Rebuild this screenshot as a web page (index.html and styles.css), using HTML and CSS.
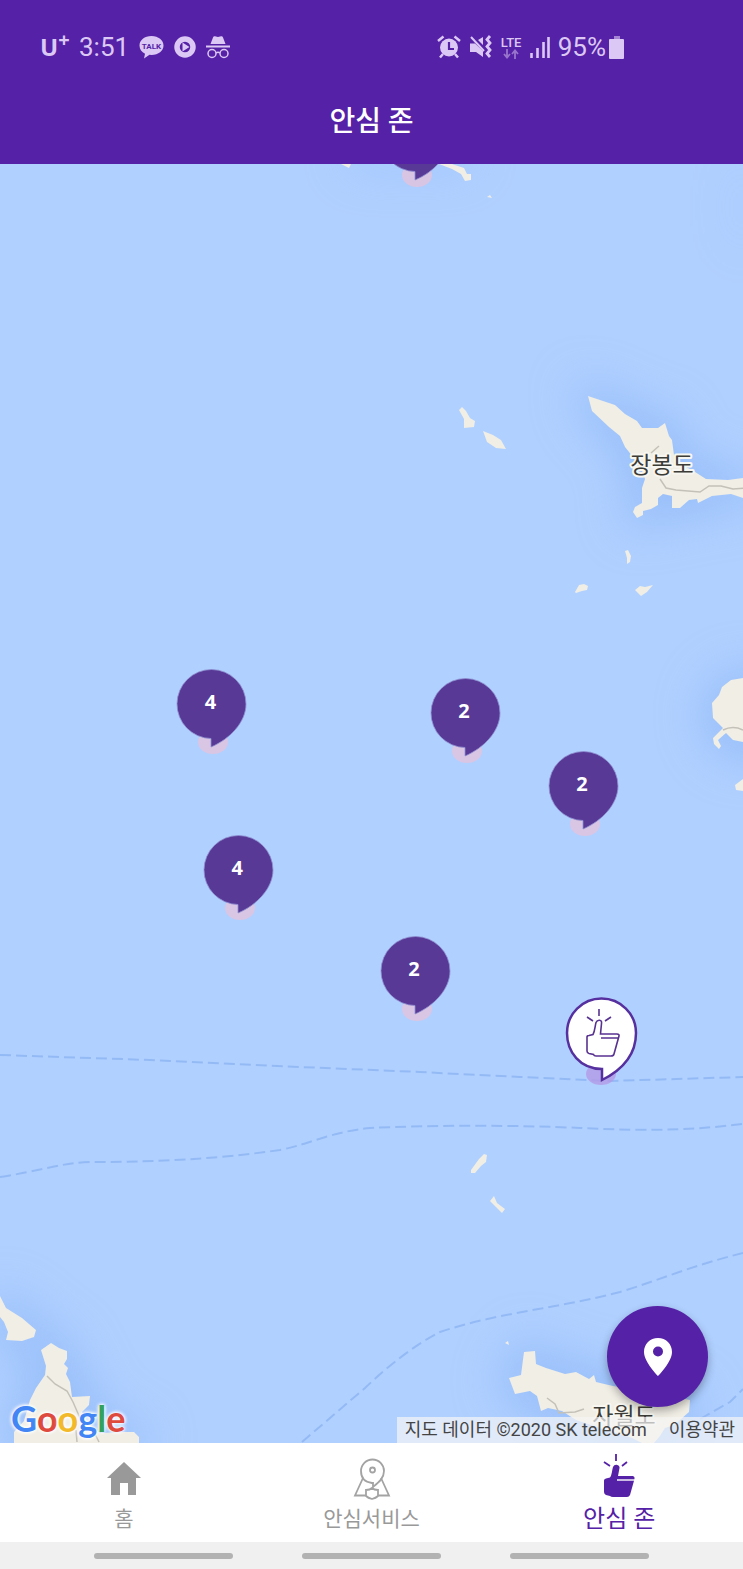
FILE: index.html
```html
<!DOCTYPE html>
<html lang="ko">
<head>
    <meta charset="UTF-8">
    <meta name="viewport" content="width=device-width, initial-scale=1.0">
    <title>안심 존</title>
    <link rel="stylesheet" href="styles.css">
</head>
<body>
    <!-- shared marker shape -->
    <svg class="defs" width="0" height="0" aria-hidden="true">
        <symbol id="pin" viewBox="0 0 76 90">
            <ellipse cx="38" cy="75" rx="15" ry="12" fill="#e3c3dd" opacity="0.800"/>
            <path d="M36 71.500A34.500 34.500 0 1 1 71 37C71 55 55 72 36 80Z" fill="#583996" stroke="#8f8fd0" stroke-width="0.800"/>
        </symbol>
    </svg>

    <div class="app">
        <div class="status-bar">
            <div class="status-group">
                <span class="carrier">U<sup>+</sup></span>
                <span class="clock">3:51</span>
                <svg class="ic-talk" viewBox="0 0 25 24">
                    <path d="M12.500 1C5.500 1 .5 5.200.5 10.500c0 3.800 2.300 6.600 5.500 8.200L5 23.500l5.500-3.700 2 .1c7 0 12-4.200 12-9.400S19.500 1 12.500 1z" fill="currentColor"/>
                    <text x="12.500" y="13.500" text-anchor="middle">TALK</text>
                </svg>
                <svg class="ic-play" viewBox="0 0 22 22">
                    <circle cx="11" cy="11" r="8" fill="none" stroke="currentColor" stroke-width="5.500"/>
                    <path d="M8.500 6.500v9l7-4.500z" fill="currentColor"/>
                </svg>
                <svg class="ic-spy" viewBox="0 0 24 24">
                    <path d="M4.500 9L7 2.500Q7.500 1 9 1.300l3 .7 3-.7q1.500-.3 2 1.200L19.500 9zM0 10.500h24v2H0z" fill="currentColor"/>
                    <g fill="none" stroke="currentColor" stroke-width="1.500"><circle cx="6" cy="18.500" r="4"/><circle cx="18" cy="18.500" r="4"/><path d="M10 18q2-1.500 4 0"/></g>
                </svg>
            </div>
            <div class="status-group right">
                <svg class="ic-alarm" viewBox="0 0 24 24">
                    <circle cx="12" cy="12.500" r="9" fill="currentColor"/>
                    <path d="M1 6l5.500-4.500M23 6l-5.500-4.500M6 19L3 22.500M18 19l3 3.500" stroke="currentColor" stroke-width="2.500"/>
                    <path d="M12 7v7h5" fill="none" stroke="#5521a6" stroke-width="2.200"/>
                </svg>
                <svg class="ic-mute" viewBox="0 0 24 24">
                    <path d="M1 8.500h5l8 7.500v6l-7-5H1zM9 5l5-3v8z" fill="currentColor"/>
                    <path d="M2 2l13 14" stroke="currentColor" stroke-width="2"/>
                    <path d="M21 1l-3 3.500 3 3.500-3 3.500 3 3.500-3 3.500 3 3.500" fill="none" stroke="currentColor" stroke-width="2.800"/>
                </svg>
                <span class="lte">LTE
                    <svg viewBox="0 0 16 10"><path d="M4 0v8M1 5l3 3.500L7 5M12 10V2M9 5l3-3.500L15 5" fill="none" stroke="currentColor" stroke-width="1.800"/></svg>
                </span>
                <svg class="ic-signal" viewBox="0 0 20 22"><path d="M1.500 17v5M7.500 12v10M13.500 6v16M18.500 1v21" stroke="currentColor" stroke-width="2.600"/></svg>
                <span class="percent">95%</span>
                <svg class="ic-battery" viewBox="0 0 16 23"><path d="M5 0h6v3H5z" fill="currentColor" opacity="0.600"/><rect y="3" width="15" height="20" rx="1" fill="currentColor"/></svg>
            </div>
        </div>

        <header class="title-bar">
            <h1>안심 존</h1>
        </header>

        <main class="map">
            <svg class="map-canvas" viewBox="0 164 743 1279" preserveAspectRatio="xMidYMid slice" aria-hidden="true">
                <defs>
                    <filter id="soft" x="-50%" y="-50%" width="200%" height="200%"><feGaussianBlur stdDeviation="24"/></filter>
                    <path id="jangbong" d="M588 396L615 405L625 414L637 421L642 428L658 428L665 423L669 436L672 440L674 455L680 464L692 470L706 479L728 480L743 478V498L731 494L712 496L698 503L697 499L689 500L680 508H672V496L663 494L658 498V505L651 509L643 511L643 515L637 518L633 512L635 507L642 503V488L645 479L641 468L633 457L625 447L620 436L609 427L592 411Z"/>
                    <path id="southwest" d="M0 1296L6 1308L22 1318L36 1330L34 1337L22 1341L6 1340L8 1332L4 1322L0 1317ZM41 1350L51 1343L59 1348L67 1351L67 1359L64 1364L68 1368L66 1374L70 1382L72 1397L90 1396L89 1405L82 1412L88 1423L100 1433L124 1432L134 1432L139 1437V1443H14L14 1432L24 1421L30 1400L36 1388L45 1375L46 1366Z"/>
                    <path id="jawol" d="M524 1352L535 1351L536 1364L546 1368L565 1374L576 1372L589 1379L594 1375L596 1382L613 1386L690 1400L689 1412L680 1420L674 1425L665 1428L660 1436L654 1443H642L632 1438L600 1428L576 1420L562 1411L548 1408L541 1411L537 1396L530 1391L515 1394L509 1378L521 1375Z"/>
                </defs>
                <rect y="164" width="743" height="1279" fill="#b0d0ff"/>
                <g filter="url(#soft)" fill="#83aff5" stroke="#83aff5" stroke-width="22" opacity="0.550">
                    <use href="#jangbong"/>
                    <use href="#southwest"/>
                    <use href="#jawol"/>
                    <circle cx="748" cy="715" r="35"/>
                </g>
                <path d="M350 150H470V164H350ZM743 164V250" fill="#83aff5" stroke="#83aff5" stroke-width="8" filter="url(#soft)" opacity="0.400"/>
                <g fill="#f0eee5">
                    <use href="#jangbong"/>
                    <use href="#southwest"/>
                    <use href="#jawol"/>
                    <path d="M341 164H351L349 168ZM439 164H452L464 168L467 174L471 174L471 180L465 181L461 174L452 169ZM487 197l3-2 2 3z"/>
                    <path d="M459 410l3-3 4 4 4 7 5 3-1 6-10 1 0-9zM483 431l10 4 8 5 5 9-10-1-9-6z"/>
                    <path d="M625 551l3-1 3 6-1 6-3 2 0-6zM575 592l4-7 5-1 4 2-1 4-5 1-6 2zM635 590l5-4 5 1 8-2-6 7-6 4z"/>
                    <path d="M743 678L731 680L722 687L719 695L712 703L713 718L723 728L713 738L714 744L719 749L721 746L718 740L726 733L733 740L743 742ZM743 779L735 785L736 790L743 791Z"/>
                    <path d="M471 1170l8-11 5-5 3 1-1 7-5 4-6 7h-4zM490 1201l4-5 3 7 8 6-3 4-6-6zM505 1343l3-2 1 4z"/>
                </g>
                <g fill="none" stroke="#c4c1b8" stroke-width="1.500">
                    <path d="M651 453l8-7M660 479l6 9 10 2 24 2 9-6 12 0 12 3 13-1"/>
                    <path d="M723 730q10-5 20 0M47 1376l8 8 12 7 6 11 7 16M77 1442l-1-12M93 1430l6 12M547 1398l8 6 4 9 16-1 9-3"/>
                </g>
                <!-- ferry routes -->
                <g fill="none" stroke="#94baf5" stroke-width="2" stroke-dasharray="11 5">
                    <path d="M0 1055L150 1060L300 1067L420 1072L520 1077L610 1081L743 1077"/>
                    <path d="M0 1177C40 1171 60 1163 90 1162C150 1162 210 1160 280 1150C310 1144 330 1132 370 1128C430 1125 520 1125 580 1128C660 1132 700 1129 743 1124"/>
                    <path d="M302 1442L365 1388Q405 1350 440 1332C500 1312 560 1308 620 1292C660 1280 690 1266 743 1253"/>
                    <path d="M700 1419L730 1402L743 1389"/>
                </g>
                <g class="place" text-anchor="middle">
                    <text x="662" y="473">장봉도</text>
                    <text x="624" y="1424">자월도</text>
                </g>
            </svg>

            <button class="marker m1" type="button"><svg><use href="#pin"/></svg><span>4</span></button>
            <button class="marker m2" type="button"><svg><use href="#pin"/></svg><span>2</span></button>
            <button class="marker m3" type="button"><svg><use href="#pin"/></svg><span>2</span></button>
            <button class="marker m4" type="button"><svg><use href="#pin"/></svg><span>4</span></button>
            <button class="marker m5" type="button"><svg><use href="#pin"/></svg><span>2</span></button>
            <button class="marker m6" type="button" aria-label="안심 존"><svg><use href="#pin"/></svg></button>
            <button class="marker m7" type="button" aria-label="안심 존">
                <svg viewBox="0 0 76 90">
                    <ellipse cx="36" cy="79" rx="15" ry="11" fill="#b497e6" opacity="0.750"/>
                    <path d="M37 74C15 74 2 57 2 38A34.500 34.500 0 0 1 71 38C71 61 55 76 37 85V74Z" fill="#fff" stroke="#56309f" stroke-width="2.500"/>
                    <g transform="translate(21 14)" fill="none" stroke="#583290" stroke-width="1.600">
                        <path d="M13 0v7M1 8l6 4M25 8l-6 4"/>
                        <path d="M1 28Q1 26.500 3 26.500L7 25.500C9 22 9 17 10 13.500Q11 11 13.500 11.200Q16 11.500 15.500 14.500L14.500 25H31Q33.500 25.200 33 27L28 45Q27.500 47 25 47H10Q8 47 7.500 45.500L3 44.500Q1 44 1 42ZM15 29H32"/>
                    </g>
                </svg>
            </button>

            <a class="google" href="#" aria-label="Google"><span class="blue">G</span><span class="red">o</span><span class="yellow">o</span><span class="blue">g</span><span class="green">l</span><span class="red">e</span></a>

            <div class="attribution">
                <span>지도 데이터 ©2020 SK telecom</span>
                <a href="#">이용약관</a>
            </div>

            <button class="fab" type="button" aria-label="내 위치">
                <svg viewBox="0 0 28 38"><path d="M14 0C6 0 0 6 0 14c0 10 14 24 14 24s14-14 14-24C28 6 22 0 14 0zm0 18.500a5 5 0 1 1 0-10 5 5 0 0 1 0 10z" fill="#fff"/></svg>
            </button>
        </main>

        <nav class="tabs">
            <a href="#">
                <svg viewBox="0 0 36 48"><path d="M18 7L1 23h4v17h9V28h8v12h8V23h5z" fill="#999"/></svg>
                <span>홈</span>
            </a>
            <a href="#">
                <svg viewBox="0 0 36 48" fill="none" stroke="#a3a3a3" stroke-width="1.800">
                    <path d="M18 28C10 27 7 22 7 16a11.500 11.500 0 0 1 23 0C30 23 25 27 19 32v-4z"/>
                    <circle cx="18.500" cy="15" r="2.500"/>
                    <path d="M9 23L1 40.500h11M27 23l8 17.500H24M12 35q4 0 6-2 2 2 6 2v6q-2 2-6 3-4-1-6-3z"/>
                </svg>
                <span>안심서비스</span>
            </a>
            <a href="#" class="active">
                <svg viewBox="-3 1 36 48">
                    <path d="M12 0v7M0 8l6 4M23 8l-5 4" fill="none" stroke="#5521a6" stroke-width="1.800"/>
                    <path d="M0 26.500Q0 25 2 24.500L6 23.500C8 21 8 16 9 13Q10 10.500 12.500 10.700Q16 11.500 15.500 14L14 22H29Q31 22.500 30.500 25L26 41Q25 43 23 43H9Q7 43 6 42L2 41Q0 40 0 38Z" fill="#5521a6"/>
                    <path d="M13 26H31" stroke="#fff" stroke-width="1.400"/>
                </svg>
                <span>안심 존</span>
            </a>
        </nav>

        <div class="system-bar">
            <i></i>
            <i></i>
            <i></i>
        </div>
    </div>
</body>
</html>
```
FILE: styles.css
```css
* {
    box-sizing: border-box;
}

body {
    margin: 0;
    font-family: Roboto, 'Noto Sans CJK KR', sans-serif;
    background-color: #f0f0f0;
}

button {
    border: none;
    background: none;
    padding: 0;
    font-family: inherit;
    cursor: pointer;
}

a {
    color: inherit;
    text-decoration: none;
}

svg {
    display: block;
    overflow: visible;
}

.defs {
    position: absolute;
}

.app {
    display: flex;
    flex-direction: column;
    min-height: 100vh;
}

/* status bar */
.status-bar {
    display: flex;
    justify-content: space-between;
    align-items: center;
    height: 76px;
    padding: 18px 118px 0 40px;
    background-color: #5521a6;
    color: #dcc8f4;
}

.status-group {
    display: flex;
    align-items: center;
    gap: 10px;
}

.status-group.right {
    gap: 8px;
}

.carrier {
    width: 29px;
    font-family: 'Open Sans', sans-serif;
    font-size: 24px;
    font-weight: 700;
    line-height: 32px;
    white-space: nowrap;
}

.carrier sup {
    font-size: 20px;
    line-height: 0;
}

.clock, .percent {
    font-size: 26px;
    line-height: 32px;
}

.ic-talk {
    width: 25px;
    height: 24px;
}

.ic-talk text {
    font-size: 8px;
    font-weight: 700;
    fill: #5521a6;
}

.ic-play {
    width: 22px;
    height: 22px;
}

.ic-spy, .ic-alarm, .ic-mute {
    width: 24px;
    height: 24px;
}

.lte {
    width: 21px;
    font-size: 13px;
    font-weight: 500;
    line-height: 13px;
}

.lte svg {
    width: 16px;
    height: 10px;
    margin: 0 auto;
    opacity: 0.5;
}

.ic-signal {
    width: 20px;
    height: 22px;
}

.percent {
    margin-right: -5px;
}

.ic-battery {
    width: 16px;
    height: 23px;
}

.title-bar {
    display: flex;
    justify-content: center;
    align-items: center;
    height: 88px;
    padding-top: 4px;
    background-color: #5521a6;
    color: #ffffff;
}

.title-bar h1 {
    margin: 0;
    font-size: 28px;
    font-weight: 500;
    line-height: 40px;
}

/* map */
.map {
    position: relative;
    flex: 1;
    min-height: 600px;
    overflow: hidden;
    background-color: #b0d0ff;
}

.map-canvas {
    position: absolute;
    width: 100%;
    height: 100%;
}

.place {
    font-size: 23px;
    fill: #3c3c38;
    stroke: #f7f6f0;
    stroke-width: 4px;
    stroke-linejoin: round;
    paint-order: stroke;
}

.marker {
    position: absolute;
    width: 76px;
    height: 90px;
    margin: -37px 0 0 -37px;
    color: #ffffff;
}

.marker svg {
    width: 100%;
    height: 100%;
}

.marker span {
    position: absolute;
    top: 23px;
    left: 0;
    width: 70px;
    font-family: 'Noto Sans', sans-serif;
    font-size: 20px;
    font-weight: 700;
    line-height: 24px;
    text-align: center;
}

.m1 { left: 28.6%; top: 42.2%; }
.m2 { left: 62.7%; top: 42.9%; }
.m3 { left: 78.6%; top: 48.6%; }
.m4 { left: 32.2%; top: 55.2%; }
.m5 { left: 56%; top: 63.1%; }
.m6 { left: 56%; top: -2.1%; }
.m7 { left: 81%; top: 67.9%; }

.google {
    position: absolute;
    left: 11px;
    bottom: 1px;
    font-family: Lato, sans-serif;
    font-size: 36px;
    font-weight: 700;
    line-height: 48px;
    text-shadow: 0 0 4px #ffffff, 0 0 4px #ffffff, 0 0 3px #ffffff;
}

.blue { color: #4285f4; }
.red { color: #de4a3e; }
.yellow { color: #f2b92b; }
.green { color: #34a15a; }

.attribution {
    position: absolute;
    right: 0;
    bottom: 0;
    display: flex;
    gap: 22px;
    padding: 0 8px;
    background-color: rgba(245, 245, 245, 0.7);
    color: #444444;
    font-size: 18px;
    line-height: 26px;
    white-space: nowrap;
}

.fab {
    position: absolute;
    right: 35px;
    bottom: 36px;
    display: flex;
    justify-content: center;
    align-items: center;
    width: 101px;
    height: 101px;
    border-radius: 50%;
    background-color: #5521a6;
    box-shadow: 0 4px 8px rgba(0, 0, 0, 0.3);
}

.fab svg {
    width: 28px;
    height: 38px;
}

/* bottom tabs */
.tabs {
    display: flex;
    height: 99px;
    background-color: #ffffff;
}

.tabs a {
    display: flex;
    flex: 1;
    flex-direction: column;
    align-items: center;
    padding-top: 12px;
    color: #999999;
    font-size: 21px;
    line-height: 32px;
}

.tabs svg {
    width: 36px;
    height: 48px;
}

.tabs .active {
    color: #5521a6;
    font-size: 24px;
}

.system-bar {
    display: flex;
    justify-content: center;
    align-items: center;
    gap: 69px;
    height: 27px;
    background-color: #f0f0f0;
}

.system-bar i {
    width: 139px;
    height: 6px;
    border-radius: 3px;
    background-color: #b2b2b2;
}
```
